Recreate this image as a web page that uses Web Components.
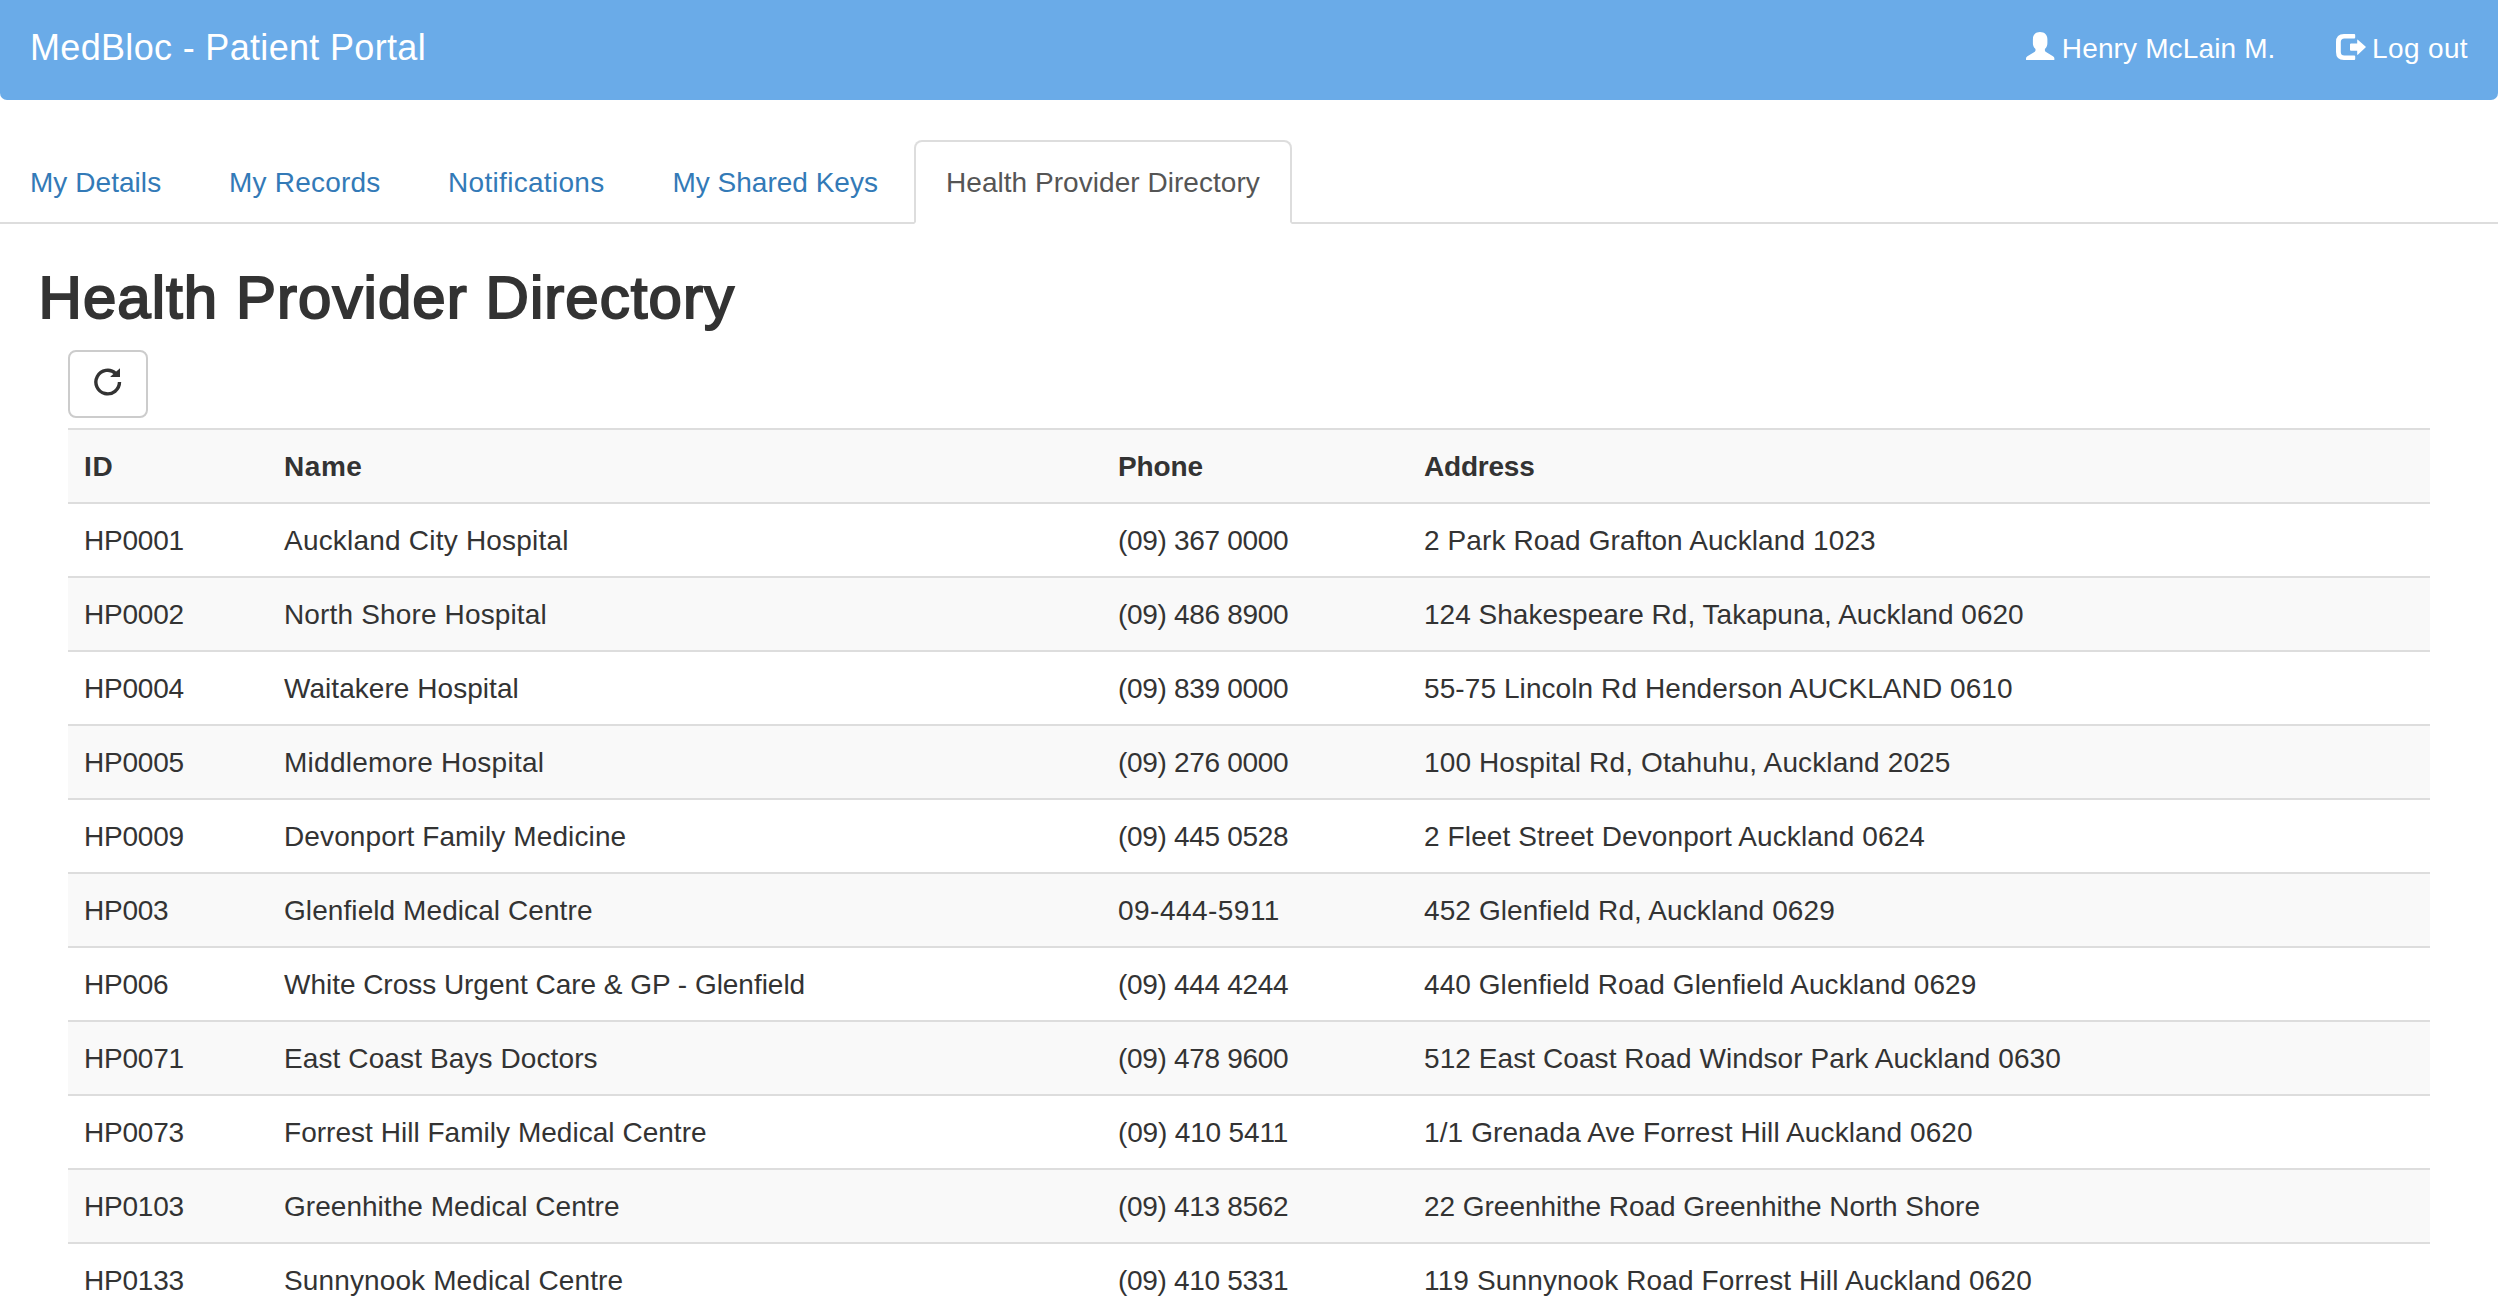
<!DOCTYPE html>
<html lang="en">
<head>
<meta charset="utf-8">
<title>MedBloc - Patient Portal</title>
<style>
  html, body { margin: 0; background: #fff; }
  body { font: 28px/40px "Liberation Sans", Arial, sans-serif; color: #333; height: 1310px; overflow: hidden; }
</style>
</head>
<body>
<patient-portal></patient-portal>
<script>
// Advance widths in 1/1000 em, used to space text evenly.
const ADV = {};
const put = (chars, w) => { for (const c of chars) ADV[c] = w; };
put('ace', 537); put('bdpq', 593); put('f', 296); put('go', 574); put('hnu', 556); put('ijl', 222);
put('k', 519); put('m', 853); put('r', 333); put('svy', 500); put('t', 315); put('w', 758); put('x', 518); put('z', 480);
put('AKSPY', 648); put('K', 667); put('BR', 685); put('CHNU', 722); put('D', 704); put('EVXZ', 611); put('FT', 574);
put('G', 759); put('I', 259); put('J', 519); put('L', 556); put('M', 871); put('OQ', 760); put('W', 926);
put('0123456789', 556); put(' .,', 278); put('()', 259); put('-', 389); put('/', 333); put('&', 630);
const KERN = { 'Ta': -110, 'Wa': -40, 'P0': -25, 'P ': -40, 'ro': -15, 'ov': -15 };

class FitText extends HTMLElement {
  connectedCallback() {
    const root = this.attachShadow({ mode: 'open' });
    root.innerHTML = '<style>:host{display:inline-block;white-space:pre}</style><span><slot></slot></span>';
    const text = this.textContent;
    const size = parseFloat(getComputedStyle(this).fontSize);
    const target = this.hasAttribute('width') ? +this.getAttribute('width')
      : [...text].reduce((s, c, i) => s + ADV[c] + (KERN[text.substr(i, 2)] || 0), 0) * size / 1000;
    const natural = root.querySelector('span').getBoundingClientRect().width;
    this.style.letterSpacing = ((target - natural) / text.length).toFixed(4) + 'px';
  }
}
customElements.define('fit-text', FitText);

const ICONS = {
  user: ['0 0 28.4 28', 28.4, 28, '<path fill="currentColor" d="M14 0C18.5 0 21.4 2.8 21.4 7V11C21.4 13.5 20.7 15.3 18.9 17V18.6Q18.9 19.3 19.6 19.7L27 24.2Q28.4 25.1 28.4 26.4V27.4Q28.4 28 27.8 28H.6Q0 28 0 27.4V26.4Q0 25.1 1.4 24.2L8.8 19.7Q9.5 19.3 9.5 18.6V17C7.6 15.3 6.9 13.5 6.9 11V7C6.9 2.8 9.6 0 14 0Z"/>'],
  logout: ['0 0 30 26', 30, 26, '<path fill="currentColor" d="M8 0H18.2Q19.2 0 19.2 1V3.4Q19.2 4.4 18.2 4.4H8.4Q4.8 4.4 4.8 8V18Q4.8 21.6 8.4 21.6H18.2Q19.2 21.6 19.2 22.6V25Q19.2 26 18.2 26H8Q0 26 0 18V8Q0 0 8 0ZM21.2 6.2Q21.2 5 22.1 5.9L29.5 12.4Q30.2 13 29.5 13.6L22.1 20.6Q21.2 21.4 21.2 20.2V16.7H15Q14 16.7 14 15.7V10.6Q14 9.6 15 9.6H21.2Z"/>'],
  refresh: ['0 0 28 28', 28, 28, '<path fill="none" stroke="currentColor" stroke-width="3.4" d="M25.5 14A11.8 11.8 0 1 1 21.7 5.4"/><path fill="currentColor" d="M26 .2V8.9H16.5V8.4Z"/>']
};
class GlyphIcon extends HTMLElement {
  connectedCallback() {
    const [box, w, h, body] = ICONS[this.getAttribute('name')];
    this.attachShadow({ mode: 'open' }).innerHTML =
      `<style>:host{display:block;flex:none}svg{display:block}</style><svg viewBox="${box}" width="${w}" height="${h}">${body}</svg>`;
  }
}
customElements.define('glyph-icon', GlyphIcon);

class PortalNavbar extends HTMLElement {
  connectedCallback() {
    this.attachShadow({ mode: 'open' }).innerHTML = `
<style>
  :host { display: flex; justify-content: space-between; height: 100px; box-sizing: border-box; padding: 0 30px;
    background: #6aabe8; color: #fff; border-radius: 0 0 7px 7px; }
  .brand { font-size: 36px; padding-top: 28px; }
  .links { display: flex; }
  a { display: flex; padding-top: 29px; }
  .user glyph-icon { margin: 3px 7px 0 0; }
  .out glyph-icon { margin: 5px 6px 0 0; }
  .out { margin-left: 60.5px; }
</style>
<div class="brand"><fit-text>MedBloc - Patient Portal</fit-text></div>
<div class="links">
  <a class="user"><glyph-icon name="user"></glyph-icon><fit-text>Henry McLain M.</fit-text></a>
  <a class="out"><glyph-icon name="logout"></glyph-icon><fit-text>Log out</fit-text></a>
</div>`;
  }
}
customElements.define('portal-navbar', PortalNavbar);

class PortalTab extends HTMLElement {
  connectedCallback() {
    this.attachShadow({ mode: 'open' }).innerHTML = `
<style>
  :host { display: block; box-sizing: border-box; height: 84px; padding: 23px 0 0 32px; color: #337ab7; }
  :host([first]) { padding-left: 30px; }
  :host([active]) { color: #555; background: #fff; border: 2px solid #ddd; border-bottom-color: transparent;
    border-radius: 8px 8px 0 0; padding: 21px 0 0 30px; }
</style><fit-text>${this.getAttribute('label')}</fit-text>`;
  }
}
customElements.define('portal-tab', PortalTab);

class PortalTabs extends HTMLElement {
  connectedCallback() {
    this.attachShadow({ mode: 'open' }).innerHTML = `
<style>
  :host { display: grid; grid-template-columns: 197px 219px 224.5px 273.5px 378px; height: 82px; margin-top: 40px;
    border-bottom: 2px solid #ddd; }
</style><slot></slot>`;
  }
}
customElements.define('portal-tabs', PortalTabs);

class IconButton extends HTMLElement {
  connectedCallback() {
    this.attachShadow({ mode: 'open' }).innerHTML = `
<style>
  :host { display: block; }
  button { display: flex; justify-content: center; width: 80px; height: 68px; box-sizing: border-box; margin: 0;
    padding: 16px 0 0; border: 2px solid #ccc; border-radius: 8px; background: #fff; color: #333; }
</style><button aria-label="Refresh"><glyph-icon name="refresh"></glyph-icon></button>`;
  }
}
customElements.define('icon-button', IconButton);

const PROVIDERS = [
  ['HP0001', 'Auckland City Hospital', '(09) 367 0000', '2 Park Road Grafton Auckland 1023'],
  ['HP0002', 'North Shore Hospital', '(09) 486 8900', '124 Shakespeare Rd, Takapuna, Auckland 0620'],
  ['HP0004', 'Waitakere Hospital', '(09) 839 0000', '55-75 Lincoln Rd Henderson AUCKLAND 0610'],
  ['HP0005', 'Middlemore Hospital', '(09) 276 0000', '100 Hospital Rd, Otahuhu, Auckland 2025'],
  ['HP0009', 'Devonport Family Medicine', '(09) 445 0528', '2 Fleet Street Devonport Auckland 0624'],
  ['HP003', 'Glenfield Medical Centre', '09-444-5911', '452 Glenfield Rd, Auckland 0629'],
  ['HP006', 'White Cross Urgent Care & GP - Glenfield', '(09) 444 4244', '440 Glenfield Road Glenfield Auckland 0629'],
  ['HP0071', 'East Coast Bays Doctors', '(09) 478 9600', '512 East Coast Road Windsor Park Auckland 0630'],
  ['HP0073', 'Forrest Hill Family Medical Centre', '(09) 410 5411', '1/1 Grenada Ave Forrest Hill Auckland 0620'],
  ['HP0103', 'Greenhithe Medical Centre', '(09) 413 8562', '22 Greenhithe Road Greenhithe North Shore'],
  ['HP0133', 'Sunnynook Medical Centre', '(09) 410 5331', '119 Sunnynook Road Forrest Hill Auckland 0620']
];
class ProviderTable extends HTMLElement {
  connectedCallback() {
    const esc = s => s.replace(/&/g, '&amp;');
    const rows = PROVIDERS.map(r => `<tr>${r.map(c => `<td><fit-text>${esc(c)}</fit-text></td>`).join('')}</tr>`).join('');
    this.attachShadow({ mode: 'open' }).innerHTML = `
<style>
  :host { display: block; }
  table { width: 100%; table-layout: fixed; border-spacing: 0; }
  th, td { box-sizing: border-box; height: 74px; padding: 17px 16px 15px; border-top: 2px solid #ddd; text-align: left;
    vertical-align: top; white-space: nowrap; }
  fit-text { vertical-align: top; }
  tr:nth-child(odd) { background: #f9f9f9; }
</style>
<table><colgroup><col style="width:200px"><col style="width:834px"><col style="width:306px"><col></colgroup><tbody>
<tr><th><fit-text width="29.5">ID</fit-text></th><th><fit-text width="78.5">Name</fit-text></th><th><fit-text width="85">Phone</fit-text></th><th><fit-text width="110.5">Address</fit-text></th></tr>
${rows}</tbody></table>`;
  }
}
customElements.define('provider-table', ProviderTable);

class PatientPortal extends HTMLElement {
  connectedCallback() {
    this.attachShadow({ mode: 'open' }).innerHTML = `
<style>
  :host { display: block; }
  h1 { margin: 41px 0 0 38.5px; font-size: 60px; line-height: 66px; font-weight: 400; -webkit-text-stroke: 2px #333; }
  main { padding: 19px 68px 0; }
  provider-table { margin-top: 10px; }
</style>
<portal-navbar></portal-navbar>
<portal-tabs>
  <portal-tab first label="My Details"></portal-tab>
  <portal-tab label="My Records"></portal-tab>
  <portal-tab label="Notifications"></portal-tab>
  <portal-tab label="My Shared Keys"></portal-tab>
  <portal-tab active label="Health Provider Directory"></portal-tab>
</portal-tabs>
<h1><fit-text width="696.5">Health Provider Directory</fit-text></h1>
<main>
  <icon-button></icon-button>
  <provider-table></provider-table>
</main>`;
  }
}
customElements.define('patient-portal', PatientPortal);
</script>
</body>
</html>
